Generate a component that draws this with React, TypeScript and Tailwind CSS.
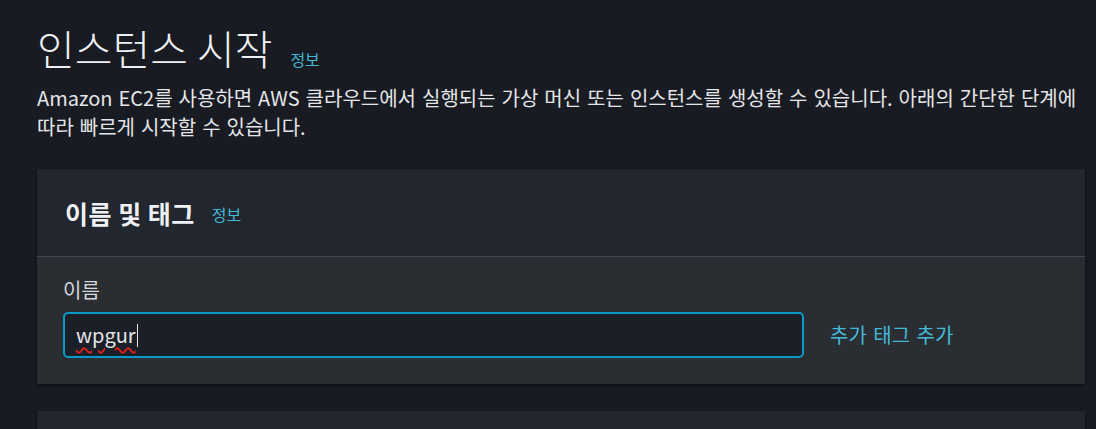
import React from "react";

export default function App() {
  return (
    <div
      className="h-[429px] w-full overflow-hidden bg-[#181b22] pl-[37px] pr-[11px] pt-[21px]"
      style={{ fontFamily: '"Noto Sans CJK KR", "Noto Sans", sans-serif' }}
    >
      <div className="flex items-end gap-[18px]">
        <h1 className="text-[41px] font-light leading-[52px] text-[#eef0f3]">인스턴스 시작</h1>
        <a className="mb-[4px] text-[16px] leading-[20px] text-[#44b9d6]">정보</a>
      </div>
      <p className="mt-[10px] text-[20px] leading-[29px] text-[#e3e5e8] [word-spacing:1.5px]">
        Amazon EC2를 사용하면 AWS 클라우드에서 실행되는 가상 머신 또는 인스턴스를 생성할 수 있습니다. 아래의 간단한 단계에 따라 빠르게 시작할 수 있습니다.
      </p>

      <div className="mt-[28px] overflow-hidden bg-[#2a2d32] shadow-[0_1px_3px_rgba(0,0,0,0.6)]">
        <div className="flex h-[88px] items-center gap-[17px] border-b border-[#434850] bg-[#22262e] px-[28px]">
          <h2 className="text-[25px] font-bold leading-[32px] tracking-[0.5px] text-[#eef0f3]">이름 및 태그</h2>
          <a className="mt-[3px] text-[16px] text-[#44b9d6]">정보</a>
        </div>
        <div className="px-[26px] pb-[26px] pt-[20px]">
          <div className="text-[20px] leading-[26px] text-[#d5d8dc]">이름</div>
          <div className="mt-[9px] flex items-center">
            <div className="flex h-[46px] w-[741px] items-center rounded-[5px] border-2 border-[#0a9ac7] bg-[#1b1f27] px-[11px]">
              <span className="relative text-[20px] leading-[26px] text-[#e3e5e8]">
                <span className="underline decoration-wavy decoration-[#e02020] decoration-[1.5px] underline-offset-[4px]">wpgur</span>
                <span className="absolute right-[-2px] top-[2px] h-[23px] w-px bg-[#e3e5e8]" />
              </span>
            </div>
            <a className="ml-[26px] text-[20px] text-[#44b9d6] [word-spacing:2px]">추가 태그 추가</a>
          </div>
        </div>
      </div>

      <div className="mt-[27px] h-[18px] bg-[#22262e] shadow-[0_1px_3px_rgba(0,0,0,0.6)]" />
    </div>
  );
}
